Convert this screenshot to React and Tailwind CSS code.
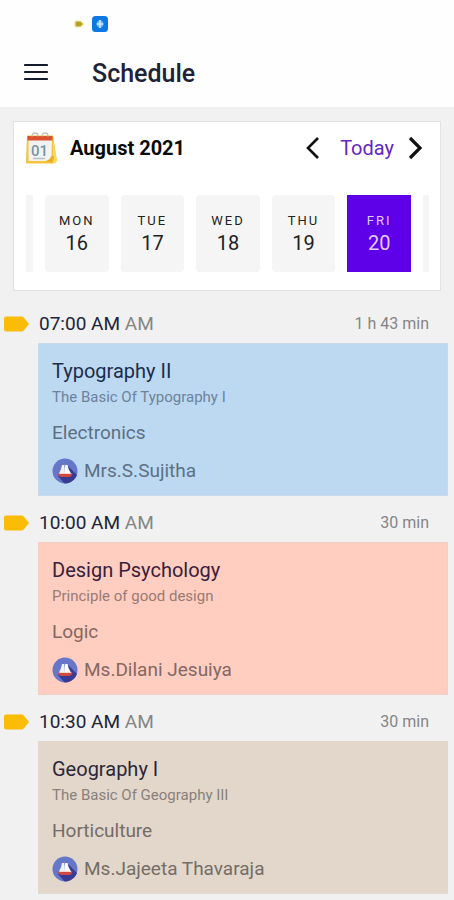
import React, { useState } from 'react';

const DAYS = [
  { name: 'MON', date: 16 },
  { name: 'TUE', date: 17 },
  { name: 'WED', date: 18 },
  { name: 'THU', date: 19 },
  { name: 'FRI', date: 20 },
];

const EVENTS = [
  {
    time: '07:00 AM',
    duration: '1 h 43 min',
    title: 'Typography II',
    subtitle: 'The Basic Of Typography I',
    subject: 'Electronics',
    teacher: 'Mrs.S.Sujitha',
    card: 'bg-[#bdd9f1] border-[#c9dbea]',
    heading: 'text-[#1b2c4e]',
    small: 'text-[#6c8299]',
    body: 'text-[#5c7085]',
  },
  {
    time: '10:00 AM',
    duration: '30 min',
    title: 'Design Psychology',
    subtitle: 'Principle of good design',
    subject: 'Logic',
    teacher: 'Ms.Dilani Jesuiya',
    card: 'bg-[#ffcec0] border-[#efcfc6]',
    heading: 'text-[#38203a]',
    small: 'text-[#9a7a73]',
    body: 'text-[#836862]',
  },
  {
    time: '10:30 AM',
    duration: '30 min',
    title: 'Geography I',
    subtitle: 'The Basic Of Geography III',
    subject: 'Horticulture',
    teacher: 'Ms.Jajeeta Thavaraja',
    card: 'bg-[#e3d7cb] border-[#e0d9d0]',
    heading: 'text-[#2a2838]',
    small: 'text-[#888079]',
    body: 'text-[#746c66]',
  },
];

const CalendarIcon = () => (
  <svg width="32" height="33" viewBox="0 0 32 33" aria-hidden="true">
    <path d="M1 3.5H27L31 29Q30 31 27 31.5H1Q0 31.5 0 30Z" fill="#f5c33c" />
    <path d="M27 8L31 29Q29 31 25 31.5L27 24Z" fill="#fbdb55" />
    <path d="M2.5 8H26L25.5 24Q24 28 20 29H2.5Z" fill="#f1f3f1" />
    <path d="M20 29Q24 28 25.5 24L28 24Q28 28 26 31Z" fill="#e8ae25" />
    <path d="M1.5 4H26.5V8.5H1.5Z" fill="#dc5230" />
    <path d="M6 4.5Q6 1 9 1T12 4.5M16 4.5Q16 1 19 1T22 4.5" fill="none" stroke="#c4c0b8" strokeWidth="1.3" />
    <text x="13.5" y="24" textAnchor="middle" fontSize="15" fontWeight="500" fontFamily="Roboto, sans-serif" fill="#7893a6">01</text>
    <path d="M7 26.5H19" stroke="#b4c0c8" strokeWidth="1.5" />
  </svg>
);

const BoatAvatar = () => (
  <svg width="26" height="26" viewBox="0 0 26 26" aria-hidden="true">
    <defs>
      <clipPath id="avatar">
        <circle cx="13" cy="13" r="12.5" />
      </clipPath>
    </defs>
    <g clipPath="url(#avatar)">
      <rect width="26" height="26" fill="#6676c9" />
      <path d="M16 8L26 18V26H13L6 18Z" fill="#373b93" />
      <path d="M10 7H12.5L13 15.5H7Q9.5 11 10 7Z" fill="#f0f2fa" />
      <path d="M13 7H15.5Q16 11 19 15.5H12.8Z" fill="#ffffff" />
      <path d="M12 6.5H13.5L12.8 10Z" fill="#8a92cc" />
      <path d="M5.5 15.5H20.5Q20 18.5 17.5 19H9Q6.5 18.5 5.5 15.5Z" fill="#d04a42" />
      <path d="M7.5 15H19L19.3 16H7.2Z" fill="#f6d3cd" />
    </g>
  </svg>
);

const TagIcon = () => (
  <svg width="25" height="16" viewBox="0 0 25 16" aria-hidden="true">
    <path d="M2 .5H17.5Q19 .5 20 1.8L25 8L20 14.2Q19 15.5 17.5 15.5H2Q0 15.5 0 13.5V2.5Q0 .5 2 .5Z" fill="#fbbc05" />
  </svg>
);

const StatusIcons = () => (
  <div className="flex h-12 items-center gap-2 pl-[74px]">
    <svg width="10" height="8" viewBox="0 0 10 8" aria-hidden="true">
      <path d="M1 .8H6.5L10 4L6.5 7.2H1Q0 4 1 .8Z" fill="#ecd968" />
      <path d="M2 1.8H6.5L8.5 4L6.5 6.2H2Z" fill="#b3a02c" />
    </svg>
    <svg width="16" height="16" viewBox="0 0 16 16" aria-hidden="true">
      <rect width="16" height="16" rx="3.5" fill="#0b78e3" />
      <path d="M8 3.5L10.5 5.5L12 8L10.5 10.5L8 12.5L5.5 10.5L4 8L5.5 5.5Z" fill="#69b4f6" />
      <path d="M8 4V12M5 8H11" stroke="#d3ebff" strokeWidth="1.4" />
    </svg>
  </div>
);

const EventItem = ({ event }) => (
  <li>
    <div className="mt-2 flex h-[38px] items-center pl-1 pr-[25px]">
      <TagIcon />
      <p className="ml-[10px] flex-1 text-[19px] text-[#20243a]">
        {event.time} <span className="text-[#858585]">AM</span>
      </p>
      <span className="text-[16px] text-[#858585]">{event.duration}</span>
    </div>
    <article className={`ml-[38px] mr-[6px] border px-[13px] pb-[11px] pt-[15px] ${event.card}`}>
      <h2 className={`text-[20px] leading-6 ${event.heading}`}>{event.title}</h2>
      <p className={`mt-1 text-[15px] leading-5 ${event.small}`}>{event.subtitle}</p>
      <p className={`mt-[14px] text-[19px] leading-6 ${event.body}`}>{event.subject}</p>
      <div className={`mt-[13px] flex items-center gap-[6px] text-[19px] leading-6 ${event.body}`}>
        <BoatAvatar />
        <span>{event.teacher}</span>
      </div>
    </article>
  </li>
);

const SchedulePage = () => {
  const [selected, setSelected] = useState(20);

  return (
    <div className="min-h-screen bg-[#f1f1f1] pb-[5px] font-[Roboto,sans-serif]">
      <header className="bg-[#fefefe] pb-4">
        <StatusIcons />
        <div className="flex h-[43px] items-center">
          <button type="button" aria-label="Menu" className="ml-6 mt-1">
            <svg width="24" height="18" viewBox="0 0 24 18" aria-hidden="true">
              <path d="M1 2H23M1 9H23M1 16H23" stroke="#171b2e" strokeWidth="2.2" strokeLinecap="round" />
            </svg>
          </button>
          <h1 className="ml-11 mt-2 text-[25px] font-medium leading-8 text-[#1f2237]">Schedule</h1>
        </div>
      </header>

      <main>
        <section className="mx-[13px] mt-[14px] border border-[#e2e2e2] bg-white pb-[18px] pl-3 pr-[11px] pt-[6px]">
          <div className="flex h-10 items-center">
            <CalendarIcon />
            <h2 className="ml-3 flex-1 text-[20px] font-bold text-[#0a0a0a]">August 2021</h2>
            <button type="button" aria-label="Previous week">
              <svg width="15" height="24" viewBox="0 0 15 24" fill="none" aria-hidden="true">
                <path d="M13 2L3 12L13 22" stroke="#111" strokeWidth="2.6" />
              </svg>
            </button>
            <button type="button" className="ml-5 text-[20px] text-[#6428c4]">Today</button>
            <button type="button" aria-label="Next week" className="ml-[14px] mr-[6px]">
              <svg width="15" height="24" viewBox="0 0 15 24" fill="none" aria-hidden="true">
                <path d="M2 2L12 12L2 22" stroke="#111" strokeWidth="3.2" />
              </svg>
            </button>
          </div>

          <div className="mt-[27px] flex h-[77px] gap-3">
            <div className="w-[7px] bg-[#f5f5f5]" />
            {DAYS.map((day) => (
              <button
                key={day.date}
                type="button"
                onClick={() => setSelected(day.date)}
                className={`flex flex-1 flex-col items-center pt-4 ${
                  selected === day.date ? 'bg-[#5e00e8] text-[#e3ccfb]' : 'rounded-sm bg-[#f5f5f5] text-[#222]'
                }`}
              >
                <span className="text-[13px] leading-5 tracking-[2px]">{day.name}</span>
                <span className="text-[20px] leading-6">{day.date}</span>
              </button>
            ))}
            <div className="w-[6px] bg-[#f5f5f5]" />
          </div>
        </section>

        <ul className="pt-[6px]">
          {EVENTS.map((event) => (
            <EventItem key={event.time} event={event} />
          ))}
        </ul>
      </main>
    </div>
  );
};

export default SchedulePage;
